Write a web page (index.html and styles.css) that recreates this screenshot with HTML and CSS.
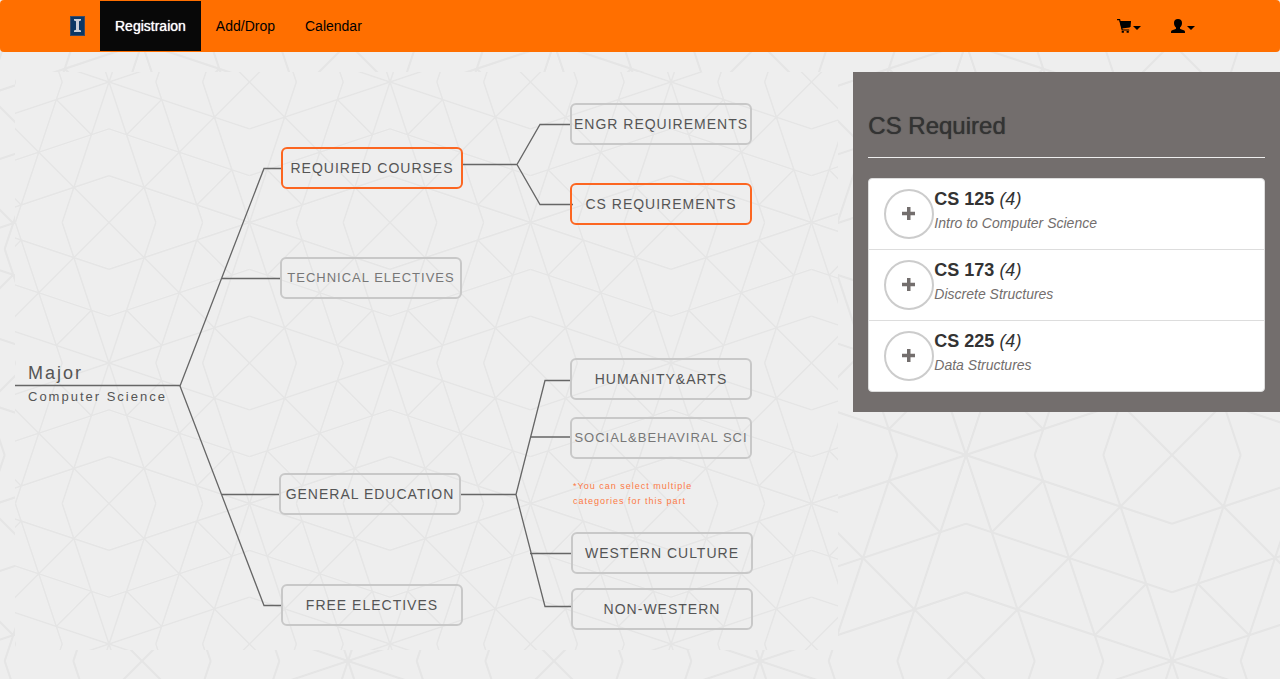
FILE: index.html
```html
<!DOCTYPE html>
<html lang="en">
<head>
<meta charset="utf-8">
<meta name="viewport" content="width=device-width, initial-scale=1">
<title>Registration</title>
<link rel="stylesheet" href="styles.css">
</head>
<body>
<header class="navbar">
  <div class="container">
    <a class="brand" href="#" aria-label="Home">
      <svg width="15" height="20" viewBox="0 0 15 20" aria-hidden="true">
        <rect width="15" height="20" fill="#3b4a66"/>
        <rect x="1" y="1" width="13" height="18" fill="#0a3765"/>
        <path d="M4 3h7v1.500L9 5.200v8.600l2 .7V16H4v-1.500l2-.7V5.200l-2-.7z" fill="#c9ced8"/>
      </svg>
    </a>
    <nav class="links">
      <a class="link active" href="#">Registraion</a>
      <a class="link" href="#">Add/Drop</a>
      <a class="link" href="#">Calendar</a>
    </nav>
    <div class="tools">
      <button class="tool" type="button" aria-label="Cart">
        <svg width="14" height="14" viewBox="0 0 14 14" aria-hidden="true">
          <path d="M.5.7h2.100L5.200 11h6.600" fill="none" stroke="#000" stroke-width="1.2" stroke-linecap="round"/>
          <path d="M2.700 2H14l-.4 5.200-1 1.300-8 1z"/>
          <path d="M4.700 12h2.200v1.800H4.700zM9.600 12h2.200v1.800H9.600z"/>
        </svg>
        <span class="caret"></span>
      </button>
      <button class="tool" type="button" aria-label="Account">
        <svg width="14" height="14" viewBox="0 0 14 14" aria-hidden="true">
          <path d="M7 0c2.600 0 4 1.500 4 4 0 2-.9 3.600-2 4.600v1.100c.6.600 4 1.100 4.700 2 .3.500.3 1.400.3 2.300H0c0-.9 0-1.800.3-2.300.7-.9 4.100-1.400 4.700-2V8.600C3.900 7.600 3 6 3 4c0-2.500 1.400-4 4-4z"/>
        </svg>
        <span class="caret"></span>
      </button>
    </div>
  </div>
</header>
<main class="row">
  <section class="plan">
    <div class="chart">
      <svg class="wires" width="823" height="578" viewBox="0 0 823 578" aria-hidden="true">
        <path d="M0 313.500H165M267 96.500H249L165 314l84 219.500h18M207 206.500h59M207 422.500h58"/>
        <path d="M447 92.500h55M557 52.500H525L502 92.500l23 40h33"/>
        <path d="M446 422.500h55M557 308.500H530L501 422.500l29 112h27M515 365h42M515 481.500h42"/>
      </svg>
      <div class="root">
        <div class="root-title">Major</div>
        <div class="root-name">Computer Science</div>
      </div>
      <button class="node selected required" type="button">REQUIRED COURSES</button>
      <button class="node small technical" type="button">TECHNICAL ELECTIVES</button>
      <button class="node general" type="button">GENERAL EDUCATION</button>
      <button class="node free" type="button">FREE ELECTIVES</button>
      <button class="node engr" type="button">ENGR REQUIREMENTS</button>
      <button class="node selected cs" type="button">CS REQUIREMENTS</button>
      <button class="node humanity" type="button">HUMANITY&amp;ARTS</button>
      <button class="node small social" type="button">SOCIAL&amp;BEHAVIRAL SCI</button>
      <p class="note">*You can select multiple<br>categories for this part</p>
      <button class="node western" type="button">WESTERN CULTURE</button>
      <button class="node nonwestern" type="button">NON-WESTERN</button>
    </div>
  </section>
  <aside class="panel">
    <h3 class="panel-title">CS Required</h3>
    <ul class="courses">
      <li class="course">
        <button class="add" type="button" aria-label="Add CS 125"><svg width="14" height="14" viewBox="0 0 14 14" aria-hidden="true"><path d="M5 0h3.500v4.800H13v3.500H8.500V13H5V8.300H0V4.800h5z"/></svg></button>
        <div><h4 class="code">CS 125 <em>(4)</em></h4><p class="name">Intro to Computer Science</p></div>
      </li>
      <li class="course">
        <button class="add" type="button" aria-label="Add CS 173"><svg width="14" height="14" viewBox="0 0 14 14" aria-hidden="true"><path d="M5 0h3.500v4.800H13v3.500H8.500V13H5V8.300H0V4.800h5z"/></svg></button>
        <div><h4 class="code">CS 173 <em>(4)</em></h4><p class="name">Discrete Structures</p></div>
      </li>
      <li class="course">
        <button class="add" type="button" aria-label="Add CS 225"><svg width="14" height="14" viewBox="0 0 14 14" aria-hidden="true"><path d="M5 0h3.500v4.800H13v3.500H8.500V13H5V8.300H0V4.800h5z"/></svg></button>
        <div><h4 class="code">CS 225 <em>(4)</em></h4><p class="name">Data Structures</p></div>
      </li>
    </ul>
  </aside>
</main>
</body>
</html>
```
FILE: styles.css
```css
:root {
  --lattice: url("data:image/svg+xml,%3Csvg xmlns='http://www.w3.org/2000/svg' xmlns:xlink='http://www.w3.org/1999/xlink' width='480' height='480' viewBox='0 0 48 48'%3E%3Cdefs%3E%3Cpath id='q' fill='none' stroke='%23e5e5e5' stroke-width='.25' d='M0 0L24 8M0 0L8 24M0 8L24 16M8 0L16 24M0 16L24 24M16 0L24 24M24 0L0 24M9 3L3 9M21 15L15 21'/%3E%3C/defs%3E%3Cuse xlink:href='%23q'/%3E%3Cuse xlink:href='%23q' transform='matrix(-1 0 0 1 48 0)'/%3E%3Cuse xlink:href='%23q' transform='matrix(1 0 0 -1 0 48)'/%3E%3Cuse xlink:href='%23q' transform='matrix(-1 0 0 -1 48 48)'/%3E%3C/svg%3E");
}
* { box-sizing: border-box; }
body {
  margin: 0;
  font: 14px/20px "Liberation Sans", Arial, sans-serif;
  color: #333;
  background: #eee var(--lattice) 142px 43px / 412px 412px;
}
button { font: inherit; color: inherit; cursor: pointer; }

.navbar {
  margin-bottom: 20px;
  padding: 1px;
  background: #ff6f00;
  border-radius: 4px;
}
.container {
  display: flex;
  align-items: center;
  max-width: 1170px;
  height: 50px;
  margin: 0 auto;
}
.brand { display: flex; padding: 15px; }
.links { display: flex; }
.link {
  padding: 15px;
  color: #000;
  text-decoration: none;
}
.link.active {
  color: #fff;
  background: #080808;
  text-shadow: 0 0 1px #fff;
}
.tools { display: flex; margin: 0 15px 0 auto; }
.tool {
  display: flex;
  align-items: center;
  gap: 2px;
  padding: 15px;
  border: 0;
  background: none;
}
.caret {
  margin-top: 4px;
  border-top: 4px solid #000;
  border-left: 4px solid transparent;
  border-right: 4px solid transparent;
}

.row {
  display: grid;
  grid-template-columns: 2fr 1fr;
  align-items: start;
}
.plan { min-width: 0; padding: 0 15px; }
.chart {
  position: relative;
  height: 578px;
  background: #eee var(--lattice) 94px 10px / 281px 281px;
}
.wires { display: block; fill: none; stroke: #666; stroke-width: 1.3; }
.root {
  position: absolute;
  left: 13px;
  top: 290px;
  color: #555;
  letter-spacing: 2px;
}
.root-title { font-size: 18px; line-height: 22px; }
.root-name { font-size: 13px; line-height: 26px; }
.node {
  position: absolute;
  width: 182px;
  height: 42px;
  padding: 0;
  border: 2px solid #c8c8c8;
  border-radius: 6px;
  background: none;
  color: #555;
  letter-spacing: 1px;
  white-space: nowrap;
}
.node.small { font-size: 13px; color: #777; }
.node.selected { border-color: #fc6621; }
.required { left: 266px; top: 75px; }
.technical { left: 265px; top: 185px; }
.general { left: 264px; top: 401px; }
.free { left: 266px; top: 512px; }
.engr { left: 555px; top: 31px; }
.cs { left: 555px; top: 111px; }
.humanity { left: 555px; top: 286px; }
.social { left: 555px; top: 345px; }
.western { left: 556px; top: 460px; }
.nonwestern { left: 556px; top: 516px; }
.note {
  position: absolute;
  left: 558px;
  top: 407px;
  margin: 0;
  color: #fc7a45;
  font-size: 9px;
  line-height: 15px;
  letter-spacing: 1px;
}

.panel {
  padding: 20px 15px;
  background: #736e6d;
}
.panel-title {
  margin: 0 0 20px;
  padding: 20px 0 18px;
  border-bottom: 1px solid #eee;
  font-size: 24px;
  line-height: 27px;
  font-weight: 400;
  text-shadow: 0 0 1px #333;
}
.courses {
  margin: 0;
  padding: 0;
  list-style: none;
  border: 1px solid #ddd;
  border-radius: 4px;
  background: #fff;
}
.course { display: flex; padding: 10px 15px; }
.course + .course { border-top: 1px solid #ddd; }
.add {
  display: flex;
  align-items: center;
  justify-content: center;
  width: 50px;
  height: 50px;
  padding: 0;
  border: 2px solid #ccc;
  border-radius: 50%;
  background: #fff;
  fill: #736e6d;
}
.code {
  margin: 0 0 4px;
  font-size: 18px;
  line-height: 20px;
}
.code em { font-weight: 400; }
.name { margin: 0; color: #736e6d; font-style: italic; }
```
